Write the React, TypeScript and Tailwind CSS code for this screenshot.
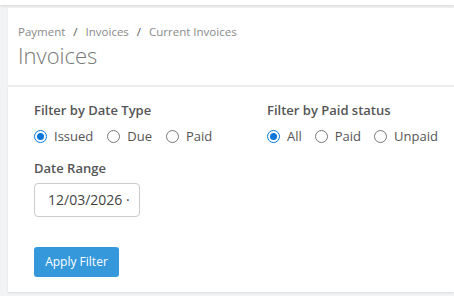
import { useState } from "react";

function Radio({ checked, label, onClick }: { checked: boolean; label: string; onClick: () => void }) {
  return (
    <label className="flex items-center gap-[7px] cursor-pointer" onClick={onClick}>
      <span
        className={`w-[13px] h-[13px] rounded-full border flex items-center justify-center ${
          checked ? "border-[#0b75d8] border-[1.5px]" : "border-[#777]"
        }`}
      >
        {checked && <span className="w-[7px] h-[7px] rounded-full bg-[#0b75d8]" />}
      </span>
      <span className="text-[13px] text-[#555]">{label}</span>
    </label>
  );
}

export default function App() {
  const [dateType, setDateType] = useState("Issued");
  const [paid, setPaid] = useState("All");

  return (
    <div className="h-[296px] overflow-hidden bg-[#f2f3f5]" style={{ fontFamily: '"Open Sans", sans-serif' }}>
      {/* Top bar */}
      <div className="h-[5px] bg-white shadow-[0_1px_3px_rgba(0,0,0,0.12)] relative z-10" />

      <div className="flex pt-[3px]">
        <div className="w-[8px] shrink-0" />
        <div className="flex-1 flex flex-col gap-[2px]">
          {/* Page header */}
          <div className="bg-white h-[77px] px-[10px] pt-[16px] shadow-[0_1px_2px_rgba(0,0,0,0.06)]">
            <div className="flex items-center gap-[8px] text-[11.5px] text-[#8a8a8a] leading-[16px]">
              <span>Payment</span>
              <span className="text-[#555]">/</span>
              <span>Invoices</span>
              <span className="text-[#555]">/</span>
              <span>Current Invoices</span>
            </div>
            <h1 className="text-[22px] font-light text-[#777] leading-[30px]">Invoices</h1>
          </div>

          {/* Filter card */}
          <div className="bg-white h-[205px] pl-[26px] pt-[14px] shadow-[0_1px_2px_rgba(0,0,0,0.1)]">
            <div className="flex">
              <div className="w-[233px]">
                <div className="text-[13px] font-semibold text-[#555] leading-[18px]">Filter by Date Type</div>
                <div className="flex items-center gap-[14px] mt-[8px]">
                  {["Issued", "Due", "Paid"].map((t) => (
                    <Radio key={t} label={t} checked={dateType === t} onClick={() => setDateType(t)} />
                  ))}
                </div>
              </div>
              <div>
                <div className="text-[13px] font-semibold text-[#555] leading-[18px]">Filter by Paid status</div>
                <div className="flex items-center gap-[13px] mt-[8px]">
                  {["All", "Paid", "Unpaid"].map((t) => (
                    <Radio key={t} label={t} checked={paid === t} onClick={() => setPaid(t)} />
                  ))}
                </div>
              </div>
            </div>

            <div className="text-[13px] font-semibold text-[#555] leading-[18px] mt-[12px]">Date Range</div>
            <div className="mt-[6px] w-[106px] h-[34px] border border-[#ccc] rounded-[4px] flex items-center pl-[13px] overflow-hidden">
              <span className="text-[14px] text-[#444] whitespace-nowrap">12/03/2026 ·</span>
            </div>

            <button className="mt-[30px] w-[85px] h-[30px] bg-[#3498db] text-white text-[12px] rounded-[3px]">
              Apply Filter
            </button>
          </div>
        </div>
      </div>
    </div>
  );
}
